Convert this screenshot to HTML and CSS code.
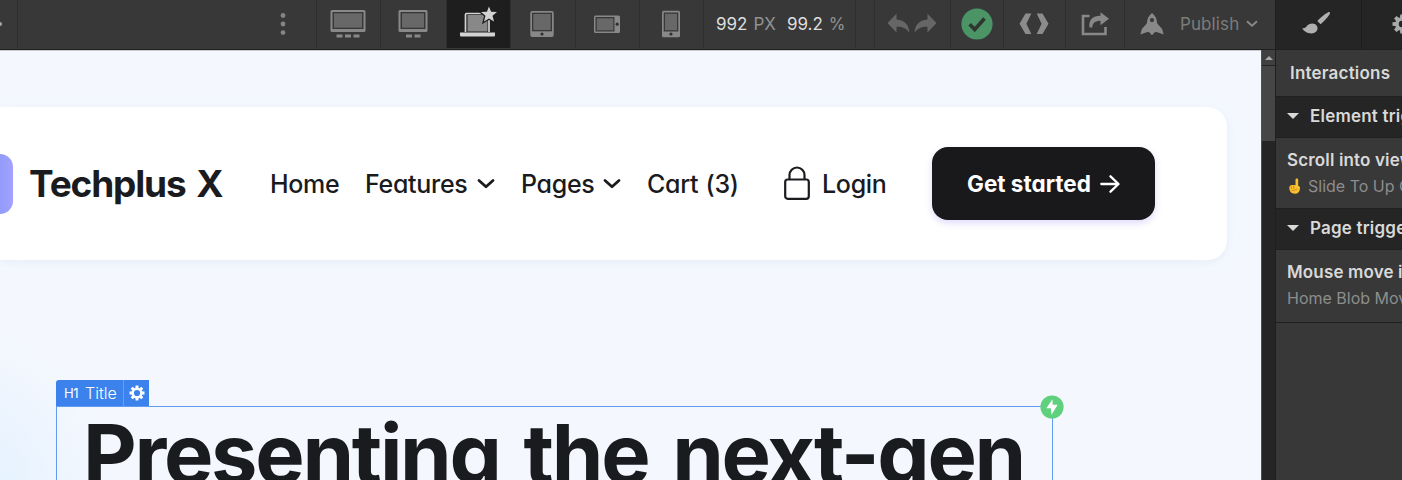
FILE: index.html
```
<!DOCTYPE html>
<html lang="en">
<head>
<meta charset="utf-8">
<title>Techplus X</title>
<link rel="stylesheet" href="styles.css">
</head>
<body>
<div class="app">
  <main class="editor">
    <div class="toolbar">
      <div class="cell c-left"><i class="crumb"></i></div>
      <div class="cell c-space"><svg class="dots" width="6" height="24" viewBox="0 0 6 24"><circle cx="3" cy="3.5" r="2.4"/><circle cx="3" cy="12" r="2.4"/><circle cx="3" cy="20.6" r="2.4"/></svg></div>
      <div class="cell w64"><svg width="36" height="30" viewBox="0 0 36 30"><rect x=".5" y="1" width="35" height="22" rx="1.5" fill="#888"/><rect x="2.5" y="3" width="31" height="17" fill="#383838"/><rect x="4" y="4.300" width="28" height="14.400" fill="#686868"/><path d="M6.500 25.500h6v3h-6zM15 25.500h6v3h-6zM23.500 25.500h6v3h-6z" fill="#888"/></svg></div>
      <div class="cell w66"><svg width="30" height="30" viewBox="0 0 30 30"><rect x=".5" y="1" width="29" height="22" rx="1.500" fill="#888"/><rect x="2.500" y="3" width="25" height="17" fill="#383838"/><rect x="4" y="4.300" width="22" height="14.400" fill="#686868"/><path d="M8 25.500h6v3H8zM16.500 25.500h6v3h-6z" fill="#888"/></svg></div>
      <div class="cell w64 active"><svg class="laptop" width="38" height="32" viewBox="0 0 38 32"><path d="M5.500 26V8.500a1 1 0 0 1 1-1H28a1 1 0 0 1 1 1V26" fill="none" stroke="#d3d3d3" stroke-width="1.700"/><rect x="7.500" y="9" width="20" height="16.500" fill="#888"/><path d="M0 26.500h35v3a1 1 0 0 1-1 1H1a1 1 0 0 1-1-1z" fill="#d3d3d3"/><path d="M29 .5l2.100 5.300 5.900.3-4.500 3.700 1.500 5.700-5-3.100-5 3.100 1.500-5.700L21 6.100l5.900-.3z" fill="#d3d3d3" stroke="#1e1e1e" stroke-width="2.600" paint-order="stroke"/></svg></div>
      <div class="cell w65"><svg width="24" height="28" viewBox="0 0 24 28"><rect x=".3" y="1" width="23.400" height="26" rx="2" fill="#888"/><rect x="2" y="2.700" width="20" height="18.600" fill="#383838"/><rect x="3.300" y="4" width="17.400" height="16" fill="#686868"/><circle cx="12" cy="24" r="1.600" fill="#303030"/></svg></div>
      <div class="cell w64"><svg width="28" height="20" viewBox="0 0 28 20"><rect x="1" y="1.500" width="26" height="17.500" rx="1.500" fill="#888"/><rect x="2.500" y="3" width="19" height="14.500" fill="#383838"/><rect x="3.800" y="4.300" width="16.600" height="12" fill="#686868"/><circle cx="24.200" cy="10.200" r="1.600" fill="#303030"/></svg></div>
      <div class="cell w64"><svg width="20" height="28" viewBox="0 0 20 28"><rect x="1" y=".7" width="18" height="26.500" rx="1.500" fill="#888"/><rect x="2.700" y="2.500" width="14.600" height="19" fill="#383838"/><rect x="4" y="3.800" width="12" height="16.400" fill="#686868"/><circle cx="10" cy="24" r="1.600" fill="#303030"/></svg></div>
      <div class="cell size"><b>992</b><span class="px">PX</span><b>99.2</b><span>%</span></div>
      <div class="cell gap"></div>
      <div class="cell w76"><svg width="50" height="22" viewBox="0 0 50 22"><path d="M.5 10L9.500 .8V6.500C18 7 22 12 22.500 20 19.500 15 15 13.500 9.500 13.700V19.500z" fill="#666"/><path d="M49.500 10L40.500 .8V6.500C32 7 28 12 27.500 20 30.500 15 35 13.500 40.500 13.700V19.500z" fill="#666"/></svg></div>
      <div class="cell w53"><svg width="32" height="32" viewBox="0 0 32 32"><circle cx="16" cy="16" r="15.600" fill="#4b9465"/><path d="M8.700 16.200l5 5.300 9.800-11" fill="none" stroke="#303632" stroke-width="3.600"/></svg></div>
      <div class="cell w62"><svg width="30" height="22" viewBox="0 0 30 22"><path d="M6.500.5H12.300L7.400 10.800 12.300 21H6.500L.5 10.800zM23.500.5H17.700l4.900 10.300L17.700 21h5.800l6-10.200z" fill="#8c8c8c"/></svg></div>
      <div class="cell w59"><svg width="28" height="24" viewBox="0 0 28 24"><path d="M8.500 4H2v18h22.500v-7" fill="none" stroke="#888" stroke-width="2.600"/><path d="M8.500 15.500C7.500 8 11.500 3.800 19.500 3.800V.2L28 6.800l-8.500 6.500V8.700c-5 0-8 2-8.300 6.800z" fill="#888"/></svg></div>
      <div class="cell publish"><svg width="24" height="24" viewBox="0 0 24 24"><path fill-rule="evenodd" d="M12 1C9 3.300 7 6.800 6.800 11.500L1.800 17 .4 22.500l6.200-2.300 2.300-.2L12 23.300l3.100-3.300 2.300.2 6.200 2.300L22.200 17l-5-5.500C17 6.800 15 3.300 12 1zm0 5a2.100 2.100 0 1 1 0 4.200A2.100 2.100 0 0 1 12 6z" fill="#888"/></svg><span>Publish</span><svg width="12" height="8" viewBox="0 0 12 8"><path d="M1 1.200l5 4.600 5-4.600" fill="none" stroke="#888" stroke-width="1.900"/></svg></div>
    </div>
    <div class="stage">
      <div class="canvas">
        <header class="site-header">
          <div class="logo"></div>
          <div class="brand">Techplus X</div>
          <nav class="nav">
            <a class="n-home">Home</a>
            <a class="n-features">Features</a><svg class="chev" width="18" height="12" viewBox="0 0 18 12"><path d="M2 2.500l7 6.200 7-6.200"/></svg>
            <a class="n-pages">Pages</a><svg class="chev" width="18" height="12" viewBox="0 0 18 12"><path d="M2 2.500l7 6.200 7-6.200"/></svg>
            <a class="n-cart">Cart (3)</a>
          </nav>
          <svg class="lock" width="26" height="34" viewBox="0 0 26 34"><path d="M5.500 13.500V9a7.500 7.500 0 0 1 15 0v4.500" fill="none" stroke="#1a1b1e" stroke-width="2.200"/><rect x="1.200" y="13.500" width="23.600" height="19.300" rx="2.500" fill="none" stroke="#1a1b1e" stroke-width="2.200"/></svg>
          <a class="login">Login</a>
          <a class="cta"><span>Get started</span><svg width="20" height="18" viewBox="0 0 20 18"><path d="M1.300 9h17M10.500 1.300L18.500 9l-8 7.700" fill="none" stroke="#fff" stroke-width="2.300" stroke-linecap="round" stroke-linejoin="round"/></svg></a>
        </header>
        <div class="label"><span class="tag">H1</span><span class="name">Title</span><span class="gear"><svg width="16" height="16" viewBox="-8 -8 16 16"><g fill="#fff"><path id="tooth" d="M-1.400-7.500h2.800L1.700-4h-3.400z"/><use href="#tooth" transform="rotate(45)"/><use href="#tooth" transform="rotate(90)"/><use href="#tooth" transform="rotate(135)"/><use href="#tooth" transform="rotate(180)"/><use href="#tooth" transform="rotate(225)"/><use href="#tooth" transform="rotate(270)"/><use href="#tooth" transform="rotate(315)"/></g><circle r="4.200" fill="none" stroke="#fff" stroke-width="2.200"/></svg></span></div>
        <div class="selection"><h1>Presenting the next-gen</h1>
          <svg class="bolt" width="24" height="24" viewBox="0 0 24 24"><circle cx="12" cy="12" r="11.600" fill="#5fd07e"/><path d="M12.400 4.200L6.300 13.200h4.500L11.500 19.800l6.200-10h-4.900z" fill="#fff"/></svg>
        </div>
      </div>
      <div class="scroll"><div class="up"><i></i></div><div class="thumb"></div></div>
    </div>
  </main>
  <aside class="panel">
    <div class="tabs">
      <div class="tab"><svg width="28" height="24" viewBox="0 0 28 24"><path d="M26.300 1.200c1.300-.7 2.300.4 1.600 1.600-2.500 4-5.500 7.500-9.300 10.400L15.300 10C18.500 6.500 22 3.500 26.300 1.200z" fill="#b0b0b0"/><path d="M.3 17.200c3 .4 3.800-1.200 5-2.600 2.600-3 7.500-2.900 9.500.2 1.600 2.700.5 5.600-2.200 6.900C8.600 23.600 2.500 21.500.3 17.200z" fill="#b0b0b0"/></svg></div>
      <div class="tab cog"><svg width="20" height="20" viewBox="-10 -10 20 20"><g fill="#aaa"><path id="t2" d="M-1.700-9.500h3.400L2.300-5h-4.600z"/><use href="#t2" transform="rotate(45)"/><use href="#t2" transform="rotate(90)"/><use href="#t2" transform="rotate(135)"/><use href="#t2" transform="rotate(180)"/><use href="#t2" transform="rotate(225)"/><use href="#t2" transform="rotate(270)"/><use href="#t2" transform="rotate(315)"/></g><circle r="5" fill="none" stroke="#aaa" stroke-width="3.500"/></svg></div>
    </div>
    <h2>Interactions</h2>
    <h3><i></i>Element trigger</h3>
    <section><strong>Scroll into view</strong><p><svg class="hand" width="14" height="16" viewBox="0 0 14 16"><path d="M7.500 1.500c0-1.500 2.700-1.500 2.700 0v6.300c1.800.5 2 1.500 1.700 3.200-.4 3-2 4.700-5 4.700-3.500 0-5-2-5.500-4.700-.3-1.800.2-3.300 1.500-3.700 1-.6 2-.5 2.800 0 .7-.5 1.200-.4 1.800 0z" fill="#fbc02d"/><path d="M3.300 8v3M5.800 8v3M3.500 12.200c2 1 4.500-.5 6-1.500" fill="none" stroke="#c8782b" stroke-width=".8"/></svg>Slide To Up On</p></section>
    <h3><i></i>Page trigger</h3>
    <section><strong>Mouse move in</strong><p>Home Blob Move</p></section>
  </aside>
</div>
</body>
</html>
```
FILE: styles.css
```
* { box-sizing: border-box; }
body { margin: 0; width: 1402px; height: 480px; overflow: hidden; background: #383838; font-family: Inter, "Liberation Sans", sans-serif; }
svg { display: block; flex: none; }
.app { display: flex; height: 480px; overflow: hidden; }
.editor { width: 1275px; flex: none; display: flex; flex-direction: column; }
.toolbar { height: 50px; flex: none; display: flex; background: #383838; border-bottom: 1px solid #202020; }
.cell { flex: none; height: 48px; display: flex; align-items: center; justify-content: center; padding-right: 1px; border-right: 1px solid #2e2e2e; }
.c-left { width: 18px; justify-content: flex-start; }
.crumb { width: 2px; height: 4px; border-radius: 0 2px 2px 0; background: #aaa; }
.c-space { width: 299px; justify-content: flex-end; padding-right: 30px; }
.dots { fill: #858585; }
.w64 { width: 64px; }
.w66 { width: 66px; padding-right: 2px; }
.w65 { width: 65px; padding-right: 3px; }
.w76 { width: 76px; padding-right: 1px; }
.w53 { width: 53px; }
.w62 { width: 62px; padding-right: 2px; }
.w59 { width: 59px; }
.cell.active { background: #1e1e1e; }
.laptop { margin: -5px 0 0 1px; }
.size { width: 152px; justify-content: flex-start; padding-left: 12px; font-size: 17px; color: #929292; }
.size b { font-weight: 400; color: #dedede; margin-right: 6px; }
.size .px { margin-right: 11px; }
.gap { width: 19px; }
.publish { flex: 1; border-right: 0; font-size: 17px; color: #7c7c7c; justify-content: flex-start; padding-left: 15px; letter-spacing: .1px; }
.publish span { margin: 0 7px 0 16px; }

.stage { flex: 1; display: flex; min-height: 0; }
.canvas { width: 1261px; flex: none; overflow: hidden; border-top: 1px solid #c8cbd0; background: radial-gradient(ellipse 150px 170px at -40px 450px, #e0f1ff 0, rgba(229,241,255,.6) 55%, rgba(244,248,254,0) 100%), #f4f8fe; color: #1a1b1e; }
.site-header { width: 1227px; height: 153px; margin-top: 56px; border-radius: 0 20px 20px 0; background: #fff; box-shadow: 0 2px 20px rgba(60,80,220,.035), 0 3px 7px rgba(40,60,40,.025); display: flex; align-items: center; }
.logo { width: 13px; height: 60px; border-radius: 0 16px 16px 0; background: linear-gradient(90deg, #939bfb, #a1a2fd); }
.brand, .nav, .login, .cta, h1 { font-feature-settings: "cv11"; white-space: nowrap; }
.brand { width: 241px; margin-left: 16px; font-size: 37px; font-weight: 650; letter-spacing: -1.15px; word-spacing: 3px; line-height: 44px; }
.nav { width: 514px; display: flex; align-items: center; font-size: 25px; font-weight: 450; }
.nav a, .login { letter-spacing: -.3px; }
.n-home { width: 95px; }
.n-features { width: 112px; }
.n-pages { width: 82px; margin-left: 26px; }
.n-cart { margin-left: 26px; word-spacing: 1px; }
.chev path { fill: none; stroke: #1a1b1e; stroke-width: 2.8; stroke-linecap: round; stroke-linejoin: round; }
.lock { margin-top: -2px; }
.login { width: 110px; margin-left: 12px; font-size: 25px; font-weight: 450; }
.cta { width: 223px; height: 73px; border-radius: 16px; background: #19191b; color: #fff; display: flex; align-items: center; padding-left: 35px; box-shadow: 0 3px 7px rgba(90,70,230,.2); }
.cta span { width: 133px; font-size: 22.500px; font-weight: 700; }
.label { width: 93px; height: 26px; margin: 120px 0 0 56px; background: #3b82ec; border-radius: 3px 0 0 0; display: flex; align-items: center; color: #fff; }
.tag { font-size: 13px; width: 21px; margin-left: 8px; letter-spacing: -.5px; }
.name { font-size: 16px; width: 38px; font-weight: 300; }
.gear { flex: 1; height: 26px; display: flex; align-items: center; justify-content: center; border-left: 1px solid #689fee; }
.selection { position: relative; width: 997px; height: 120px; margin-left: 56px; border: 1px solid #629cf0; }
h1 { margin: 7px 0 0 26px; font-size: 83px; font-weight: 700; line-height: 80px; letter-spacing: -2.3px; word-spacing: 6.5px; }
.bolt { position: absolute; right: -12px; top: -12px; }
.scroll { width: 14px; background: #252525; border-left: 1px solid #505050; }
.up { height: 16px; background: #404040; border-bottom: 1px solid #242424; display: flex; align-items: center; justify-content: center; }
.up i { border: 4px solid transparent; border-top: 0; border-bottom-color: #aaa; }
.thumb { height: 75px; background: #464646; }

.panel { width: 127px; flex: none; overflow: hidden; border-left: 1px solid #202020; color: #d9d9d9; white-space: nowrap; background: #383838; }
.tabs { height: 50px; display: flex; background: #252525; border-bottom: 1px solid #202020; }
.tab { width: 86px; flex: none; display: flex; align-items: center; padding: 0 0 4px 26px; border-right: 1px solid #1d1d1d; }
.cog { padding-left: 30px; padding-bottom: 2px; }
h2 { margin: 0; height: 46px; padding-left: 14px; font-size: 17px; font-weight: 600; letter-spacing: .2px; line-height: 46px; }
h3 { margin: 0; height: 42px; padding-bottom: 2px; display: flex; align-items: center; background: #252525; font-size: 17px; font-weight: 600; letter-spacing: .2px; border-top: 1px solid #202020; border-bottom: 1px solid #202020; }
h3 i { border: 6px solid transparent; border-bottom: 0; border-top-color: #d9d9d9; margin: 0 11px 0 11px; }
section { height: 70px; padding: 10px 0 0 11px; }
section strong { display: block; font-size: 17px; font-weight: 600; letter-spacing: .15px; line-height: 24px; }
section p { margin: 1px 0 0; font-size: 16px; line-height: 26px; color: #8d8d8d; display: flex; align-items: center; }
.hand { margin: 0 6px 0 1px; }
section:last-child { height: 73px; border-bottom: 1px solid #202020; }
```
